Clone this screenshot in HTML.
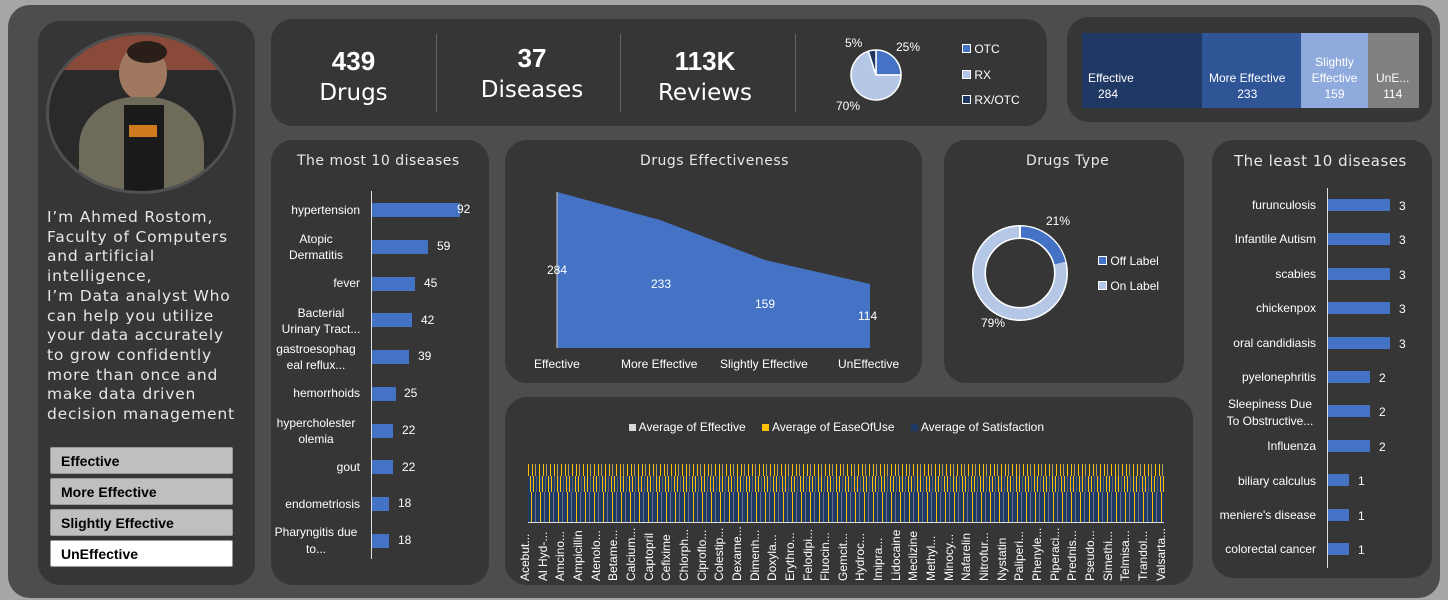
<!DOCTYPE html>
<html><head><meta charset="utf-8"><style>
*{margin:0;padding:0;box-sizing:border-box}
body{width:1448px;height:600px;background:#a6a6a6;font-family:"Liberation Sans",sans-serif;position:relative;overflow:hidden;color:#fff}
.frame{position:absolute;left:8px;top:5px;width:1432px;height:593px;background:#4d4d4d;border-radius:22px}
.p{position:absolute;background:#363636;border-radius:22px}
.t{position:absolute;white-space:nowrap}
.title{font-family:"DejaVu Sans",sans-serif;font-size:14px;color:#e8e8e8;letter-spacing:0.5px}
.lbl{font-size:12px;color:#fff;text-align:right}
.bar{position:absolute;background:#4472c4;height:14px}
.btn{position:absolute;left:50px;width:183px;height:27px;background:#bfbfbf;border:1px solid #999;border-radius:2px;color:#000;font-weight:bold;font-size:14px;padding:5px 10px}
</style></head><body>
<div class="frame"></div>

<!-- left panel -->
<div class="p" style="left:38px;top:21px;width:217px;height:564px"></div>
<div style="position:absolute;left:46px;top:32px;width:190px;height:162px;border-radius:50%;border:3px solid #505050;overflow:hidden;background:#2a2a2a">
<div style="position:absolute;left:0;top:0;width:100%;height:35px;background:#8a4a3a"></div>
<div style="position:absolute;left:70px;top:10px;width:48px;height:56px;border-radius:50%;background:#a07860"></div>
<div style="position:absolute;left:78px;top:6px;width:40px;height:22px;border-radius:50%;background:#2a1e18"></div>
<div style="position:absolute;left:30px;top:62px;width:125px;height:110px;border-radius:45% 45% 10% 10%;background:#6e6b5a"></div>
<div style="position:absolute;left:75px;top:70px;width:40px;height:90px;background:#1a1a1a"></div>
<div style="position:absolute;left:80px;top:90px;width:28px;height:12px;background:#d07a20"></div>
</div>
<div class="t" style="left:47px;top:208px;font-family:'DejaVu Sans',sans-serif;font-size:15.5px;line-height:19.7px;color:#e6e6e6;letter-spacing:0.8px">I’m Ahmed Rostom,<br>Faculty of Computers<br>and artificial<br>intelligence,<br>I’m Data analyst Who<br>can help you utilize<br>your data accurately<br>to grow confidently<br>more than once and<br>make data driven<br>decision management</div>
<div class="btn" style="top:447px">Effective</div>
<div class="btn" style="top:478px">More Effective</div>
<div class="btn" style="top:509px">Slightly Effective</div>
<div class="btn" style="top:540px;background:#fff">UnEffective</div>

<!-- KPI panel -->
<div class="p" style="left:271px;top:19px;width:776px;height:107px"></div>
<div class="t" style="left:271px;top:46px;width:165px;text-align:center;font-size:26px;font-weight:bold;line-height:30px">439<br><span style="font-weight:normal;font-family:'DejaVu Sans',sans-serif;font-size:23px">Drugs</span></div>
<div style="position:absolute;left:436px;top:34px;width:1px;height:78px;background:#666"></div>
<div class="t" style="left:442px;top:43px;width:180px;text-align:center;font-size:26px;font-weight:bold;line-height:30px">37<br><span style="font-weight:normal;font-family:'DejaVu Sans',sans-serif;font-size:23px">Diseases</span></div>
<div style="position:absolute;left:620px;top:34px;width:1px;height:78px;background:#666"></div>
<div class="t" style="left:620px;top:46px;width:170px;text-align:center;font-size:26px;font-weight:bold;line-height:30px">113K<br><span style="font-weight:normal;font-family:'DejaVu Sans',sans-serif;font-size:23px">Reviews</span></div>
<div style="position:absolute;left:795px;top:34px;width:1px;height:78px;background:#666"></div>
<svg style="position:absolute;left:840px;top:40px" width="80" height="70">
<g transform="translate(36,35)" stroke="#fff" stroke-width="1.5">
<path d="M0 0 L0 -25 A25 25 0 0 1 25 0 Z" fill="#4472c4"/>
<path d="M0 0 L25 0 A25 25 0 1 1 -7.7 -23.8 Z" fill="#b4c7e7"/>
<path d="M0 0 L-7.7 -23.8 A25 25 0 0 1 0 -25 Z" fill="#1f3864"/>
</g></svg>
<div class="t" style="left:845px;top:36px;font-size:12px">5%</div>
<div class="t" style="left:896px;top:40px;font-size:12px">25%</div>
<div class="t" style="left:836px;top:99px;font-size:12px">70%</div>
<div class="t" style="left:962px;top:42px;font-size:12px"><span style="display:inline-block;width:9px;height:9px;background:#4472c4;border:1.5px solid #fff"></span> OTC</div>
<div class="t" style="left:962px;top:68px;font-size:12px"><span style="display:inline-block;width:9px;height:9px;background:#b4c7e7;border:1.5px solid #fff"></span> RX</div>
<div class="t" style="left:962px;top:93px;font-size:12px"><span style="display:inline-block;width:9px;height:9px;background:#1f3864;border:1.5px solid #fff"></span> RX/OTC</div>

<!-- treemap -->
<div class="p" style="left:1067px;top:17px;width:365px;height:105px"></div>
<div style="position:absolute;left:1082px;top:33px;width:120px;height:75px;background:#203864"></div>
<div style="position:absolute;left:1202px;top:33px;width:99px;height:75px;background:#2f5597"></div>
<div style="position:absolute;left:1301px;top:33px;width:67px;height:75px;background:#8faadc"></div>
<div style="position:absolute;left:1368px;top:33px;width:51px;height:75px;background:#808080"></div>
<div class="t" style="left:1088px;top:70px;font-size:12px;line-height:16px">Effective<br>&nbsp;&nbsp;&nbsp;284</div>
<div class="t" style="left:1209px;top:70px;font-size:12px;line-height:16px;text-align:center">More Effective<br>233</div>
<div class="t" style="left:1303px;top:54px;font-size:12px;line-height:16px;text-align:center;width:63px">Slightly<br>Effective<br>159</div>
<div class="t" style="left:1376px;top:70px;font-size:12px;line-height:16px;text-align:center">UnE...<br>114</div>

<!-- most 10 -->
<div class="p" style="left:271px;top:140px;width:218px;height:445px"></div>
<div class="t title" style="left:297px;top:153px">The most 10 diseases</div>
<div style="position:absolute;left:371px;top:191px;width:1px;height:368px;background:#ddd"></div>
<div class="t lbl" style="left:272px;top:203px;width:88px">hypertension</div>
<div class="bar" style="left:372px;top:203px;width:88px"></div><div class="t" style="left:457px;top:202px;font-size:12px">92</div>
<div class="t lbl" style="left:272px;top:231px;width:88px;text-align:center;line-height:16px">Atopic<br>Dermatitis</div>
<div class="bar" style="left:372px;top:240px;width:56px"></div><div class="t" style="left:437px;top:239px;font-size:12px">59</div>
<div class="t lbl" style="left:272px;top:276px;width:88px">fever</div>
<div class="bar" style="left:372px;top:277px;width:43px"></div><div class="t" style="left:424px;top:276px;font-size:12px">45</div>
<div class="t lbl" style="left:272px;top:305px;width:98px;text-align:center;line-height:16px">Bacterial<br>Urinary Tract...</div>
<div class="bar" style="left:372px;top:313px;width:40px"></div><div class="t" style="left:421px;top:313px;font-size:12px">42</div>
<div class="t lbl" style="left:272px;top:341px;width:88px;text-align:center;line-height:16px">gastroesophag<br>eal reflux...</div>
<div class="bar" style="left:372px;top:350px;width:37px"></div><div class="t" style="left:418px;top:349px;font-size:12px">39</div>
<div class="t lbl" style="left:272px;top:386px;width:88px">hemorrhoids</div>
<div class="bar" style="left:372px;top:387px;width:24px"></div><div class="t" style="left:404px;top:386px;font-size:12px">25</div>
<div class="t lbl" style="left:272px;top:415px;width:88px;text-align:center;line-height:16px">hypercholester<br>olemia</div>
<div class="bar" style="left:372px;top:424px;width:21px"></div><div class="t" style="left:402px;top:423px;font-size:12px">22</div>
<div class="t lbl" style="left:272px;top:460px;width:88px">gout</div>
<div class="bar" style="left:372px;top:460px;width:21px"></div><div class="t" style="left:402px;top:460px;font-size:12px">22</div>
<div class="t lbl" style="left:272px;top:497px;width:88px">endometriosis</div>
<div class="bar" style="left:372px;top:497px;width:17px"></div><div class="t" style="left:398px;top:496px;font-size:12px">18</div>
<div class="t lbl" style="left:272px;top:524px;width:88px;text-align:center;line-height:17px">Pharyngitis due<br>to...</div>
<div class="bar" style="left:372px;top:534px;width:17px"></div><div class="t" style="left:398px;top:533px;font-size:12px">18</div>

<!-- effectiveness -->
<div class="p" style="left:505px;top:140px;width:417px;height:243px"></div>
<div class="t title" style="left:640px;top:153px">Drugs Effectiveness</div>
<svg style="position:absolute;left:505px;top:140px" width="417" height="243">
<polygon points="52,52 155,80 260,120 365,144 365,208 52,208" fill="#4472c4"/>
<line x1="52" y1="52" x2="52" y2="208" stroke="#ccc"/>
</svg>
<div class="t" style="left:547px;top:263px;font-size:12px">284</div>
<div class="t" style="left:651px;top:277px;font-size:12px">233</div>
<div class="t" style="left:755px;top:297px;font-size:12px">159</div>
<div class="t" style="left:858px;top:309px;font-size:12px">114</div>
<div class="t" style="left:534px;top:357px;font-size:12px">Effective</div>
<div class="t" style="left:621px;top:357px;font-size:12px">More Effective</div>
<div class="t" style="left:720px;top:357px;font-size:12px">Slightly Effective</div>
<div class="t" style="left:838px;top:357px;font-size:12px">UnEffective</div>

<!-- drugs type -->
<div class="p" style="left:944px;top:140px;width:240px;height:243px"></div>
<div class="t title" style="left:1026px;top:153px">Drugs Type</div>
<svg style="position:absolute;left:970px;top:223px" width="100" height="100">
<g transform="translate(50,50)">
<circle r="41" fill="none" stroke="#fff" stroke-width="14"/>
<circle r="41" fill="none" stroke="#b4c7e7" stroke-width="11"/>
<path d="M0 -41 A41 41 0 0 1 40 -10" fill="none" stroke="#4472c4" stroke-width="11"/>
<line x1="0" y1="-47" x2="0" y2="-35" stroke="#fff" stroke-width="2"/>
</g></svg>
<div class="t" style="left:1046px;top:214px;font-size:12px">21%</div>
<div class="t" style="left:981px;top:316px;font-size:12px">79%</div>
<div class="t" style="left:1098px;top:254px;font-size:12px"><span style="display:inline-block;width:9px;height:9px;background:#4472c4;border:1.5px solid #fff"></span> Off Label</div>
<div class="t" style="left:1098px;top:279px;font-size:12px"><span style="display:inline-block;width:9px;height:9px;background:#b4c7e7;border:1.5px solid #fff"></span> On Label</div>

<!-- least 10 -->
<div class="p" style="left:1212px;top:140px;width:220px;height:438px"></div>
<div class="t title" style="left:1234px;top:152px;font-size:15px">The least 10 diseases</div>
<div style="position:absolute;left:1327px;top:188px;width:1px;height:380px;background:#ddd"></div>
<div class="t lbl" style="left:1212px;top:198px;width:104px">furunculosis</div><div class="bar" style="left:1328px;top:199px;width:62px;height:12px"></div><div class="t" style="left:1399px;top:199px;font-size:12px">3</div>
<div class="t lbl" style="left:1212px;top:232px;width:104px">Infantile Autism</div><div class="bar" style="left:1328px;top:233px;width:62px;height:12px"></div><div class="t" style="left:1399px;top:233px;font-size:12px">3</div>
<div class="t lbl" style="left:1212px;top:267px;width:104px">scabies</div><div class="bar" style="left:1328px;top:268px;width:62px;height:12px"></div><div class="t" style="left:1399px;top:268px;font-size:12px">3</div>
<div class="t lbl" style="left:1212px;top:301px;width:104px">chickenpox</div><div class="bar" style="left:1328px;top:302px;width:62px;height:12px"></div><div class="t" style="left:1399px;top:302px;font-size:12px">3</div>
<div class="t lbl" style="left:1212px;top:336px;width:104px">oral candidiasis</div><div class="bar" style="left:1328px;top:337px;width:62px;height:12px"></div><div class="t" style="left:1399px;top:337px;font-size:12px">3</div>
<div class="t lbl" style="left:1212px;top:370px;width:104px">pyelonephritis</div><div class="bar" style="left:1328px;top:371px;width:42px;height:12px"></div><div class="t" style="left:1379px;top:371px;font-size:12px">2</div>
<div class="t lbl" style="left:1212px;top:396px;width:116px;text-align:center;line-height:17px">Sleepiness Due<br>To Obstructive...</div><div class="bar" style="left:1328px;top:405px;width:42px;height:12px"></div><div class="t" style="left:1379px;top:405px;font-size:12px">2</div>
<div class="t lbl" style="left:1212px;top:439px;width:104px">Influenza</div><div class="bar" style="left:1328px;top:440px;width:42px;height:12px"></div><div class="t" style="left:1379px;top:440px;font-size:12px">2</div>
<div class="t lbl" style="left:1212px;top:474px;width:104px">biliary calculus</div><div class="bar" style="left:1328px;top:474px;width:21px;height:12px"></div><div class="t" style="left:1358px;top:474px;font-size:12px">1</div>
<div class="t lbl" style="left:1212px;top:508px;width:104px">meniere's disease</div><div class="bar" style="left:1328px;top:509px;width:21px;height:12px"></div><div class="t" style="left:1358px;top:509px;font-size:12px">1</div>
<div class="t lbl" style="left:1212px;top:542px;width:104px">colorectal cancer</div><div class="bar" style="left:1328px;top:543px;width:21px;height:12px"></div><div class="t" style="left:1358px;top:543px;font-size:12px">1</div>

<!-- average chart -->
<div class="p" style="left:505px;top:397px;width:688px;height:188px"></div>
<div class="t" style="left:629px;top:420px;font-size:12px"><span style="display:inline-block;width:7px;height:7px;background:#d9d9d9"></span> Average of Effective &nbsp;&nbsp;&nbsp;&nbsp;<span style="display:inline-block;width:7px;height:7px;background:#ffc000"></span> Average of EaseOfUse &nbsp;&nbsp;&nbsp;&nbsp;<span style="display:inline-block;width:7px;height:7px;background:#203864"></span> Average of Satisfaction</div>
<div style="position:absolute;left:528px;top:464px;width:636px;height:18px;background:repeating-linear-gradient(90deg,#ffc000 0 1px,#363636 1px 3px,#203864 3px 4px,#ffc000 4px 5px,#363636 5px 7px,#c0a040 7px 8px,#203864 8px 9px,#363636 9px 11px)"></div>
<div style="position:absolute;left:528px;top:476px;width:636px;height:16px;background:repeating-linear-gradient(90deg,#203864 0 2px,#ffc000 2px 3px,#2a3f6a 3px 5px,#ffc000 5px 6px,#203864 6px 8px,#6a6a50 8px 9px)"></div>
<div style="position:absolute;left:528px;top:492px;width:636px;height:30px;background:repeating-linear-gradient(90deg,#203864 0 3px,#ffc000 3px 4px,#203864 4px 7px,#b0b0b0 7px 7.5px,#203864 7.5px 9px)"></div>
<div style="position:absolute;left:528px;top:522px;width:636px;height:1px;background:#ddd"></div>
<div style="position:absolute;left:518px;top:526px;width:650px;height:55px;display:flex;justify-content:space-between;font-size:12px">
<span style="writing-mode:vertical-rl;transform:rotate(180deg)">Acebut...</span><span style="writing-mode:vertical-rl;transform:rotate(180deg)">Al Hyd-...</span><span style="writing-mode:vertical-rl;transform:rotate(180deg)">Amcino...</span><span style="writing-mode:vertical-rl;transform:rotate(180deg)">Ampicillin</span><span style="writing-mode:vertical-rl;transform:rotate(180deg)">Atenolo...</span><span style="writing-mode:vertical-rl;transform:rotate(180deg)">Betame...</span><span style="writing-mode:vertical-rl;transform:rotate(180deg)">Calcium...</span><span style="writing-mode:vertical-rl;transform:rotate(180deg)">Captopril</span><span style="writing-mode:vertical-rl;transform:rotate(180deg)">Cefixime</span><span style="writing-mode:vertical-rl;transform:rotate(180deg)">Chlorph...</span><span style="writing-mode:vertical-rl;transform:rotate(180deg)">Ciproflo...</span><span style="writing-mode:vertical-rl;transform:rotate(180deg)">Colestip...</span><span style="writing-mode:vertical-rl;transform:rotate(180deg)">Dexame...</span><span style="writing-mode:vertical-rl;transform:rotate(180deg)">Dimenh...</span><span style="writing-mode:vertical-rl;transform:rotate(180deg)">Doxyla...</span><span style="writing-mode:vertical-rl;transform:rotate(180deg)">Erythro...</span><span style="writing-mode:vertical-rl;transform:rotate(180deg)">Felodipi...</span><span style="writing-mode:vertical-rl;transform:rotate(180deg)">Fluocin...</span><span style="writing-mode:vertical-rl;transform:rotate(180deg)">Gemcit...</span><span style="writing-mode:vertical-rl;transform:rotate(180deg)">Hydroc...</span><span style="writing-mode:vertical-rl;transform:rotate(180deg)">Imipra...</span><span style="writing-mode:vertical-rl;transform:rotate(180deg)">Lidocaine</span><span style="writing-mode:vertical-rl;transform:rotate(180deg)">Meclizine</span><span style="writing-mode:vertical-rl;transform:rotate(180deg)">Methyl...</span><span style="writing-mode:vertical-rl;transform:rotate(180deg)">Minocy...</span><span style="writing-mode:vertical-rl;transform:rotate(180deg)">Nafarelin</span><span style="writing-mode:vertical-rl;transform:rotate(180deg)">Nitrofur...</span><span style="writing-mode:vertical-rl;transform:rotate(180deg)">Nystatin</span><span style="writing-mode:vertical-rl;transform:rotate(180deg)">Paliperi...</span><span style="writing-mode:vertical-rl;transform:rotate(180deg)">Phenyle...</span><span style="writing-mode:vertical-rl;transform:rotate(180deg)">Piperaci...</span><span style="writing-mode:vertical-rl;transform:rotate(180deg)">Prednis...</span><span style="writing-mode:vertical-rl;transform:rotate(180deg)">Pseudo...</span><span style="writing-mode:vertical-rl;transform:rotate(180deg)">Simethi...</span><span style="writing-mode:vertical-rl;transform:rotate(180deg)">Telmisa...</span><span style="writing-mode:vertical-rl;transform:rotate(180deg)">Trandol...</span><span style="writing-mode:vertical-rl;transform:rotate(180deg)">Valsarta...</span>
</div>
</body></html>
